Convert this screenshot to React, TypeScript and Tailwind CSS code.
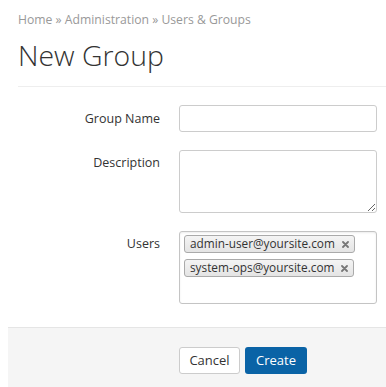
import React from "react";

const users = ["admin-user@yoursite.com", "system-ops@yoursite.com"];

function Tag({ label }: { label: string }) {
  return (
    <span className="flex h-[18px] items-center self-start rounded-[3px] border border-[#aaa] bg-gradient-to-b from-[#f4f4f4] to-[#e4e4e4] pl-[5px] pr-[5px] text-[11.8px] leading-none text-[#333]">
      {label}
      <svg className="ml-[7px]" width="7" height="7" viewBox="0 0 7 7">
        <path d="M1 1L6 6M6 1L1 6" stroke="#777" strokeWidth="1.8" strokeLinecap="round" />
      </svg>
    </span>
  );
}

export default function App() {
  return (
    <div
      className="relative h-[387px] w-[386px] overflow-hidden bg-white text-[#333]"
      style={{ fontFamily: '"Open Sans", sans-serif' }}
    >
      <div className="pl-[18px] pt-[11px]">
        <p className="text-[12.2px] leading-[18px] text-[#999]">
          Home » Administration » Users &amp; Groups
        </p>
        <h1 className="mt-[8px] text-[28.4px] font-light leading-[36px] text-[#333]">New Group</h1>
        <div className="mt-[13px] border-t border-[#eee]" />
      </div>

      <div className="mt-[18px] flex flex-col pr-[9px]">
        <div className="flex items-start">
          <label className="w-[160px] pt-[5px] text-right text-[12.5px] leading-[18px]">Group Name</label>
          <input className="ml-[19px] h-[27px] flex-1 rounded-[3px] border border-[#ccc] px-2 text-[13px] outline-none" />
        </div>
        <div className="mt-[18px] flex items-start">
          <label className="w-[160px] pt-[4px] text-right text-[12.5px] leading-[18px]">Description</label>
          <textarea className="ml-[19px] h-[63px] flex-1 rounded-[3px] border border-[#ccc] px-2 text-[13px] outline-none" />
        </div>
        <div className="mt-[18px] flex items-start">
          <label className="w-[160px] pt-[4px] text-right text-[12.5px] leading-[18px]">Users</label>
          <div className="ml-[19px] flex h-[73px] flex-1 flex-col gap-[6px] rounded-[3px] border border-[#c4c4c4] px-[4px] pt-[3px] shadow-[inset_0_1px_2px_rgba(0,0,0,0.08)]">
            {users.map((u) => (
              <Tag key={u} label={u} />
            ))}
          </div>
        </div>
      </div>

      <div className="absolute bottom-0 left-[8px] right-0 top-[327px] border-t border-[#e5e5e5] bg-[#f5f5f5] pl-[171px] pt-[19px]">
        <div className="flex h-[27px] gap-[5px]">
          <button className="w-[61px] rounded-[3px] border border-[#ccc] bg-white text-[13px] text-[#333]">Cancel</button>
          <button className="w-[62px] rounded-[3px] bg-[#0a63a6] text-[13px] text-white">Create</button>
        </div>
      </div>
    </div>
  );
}
